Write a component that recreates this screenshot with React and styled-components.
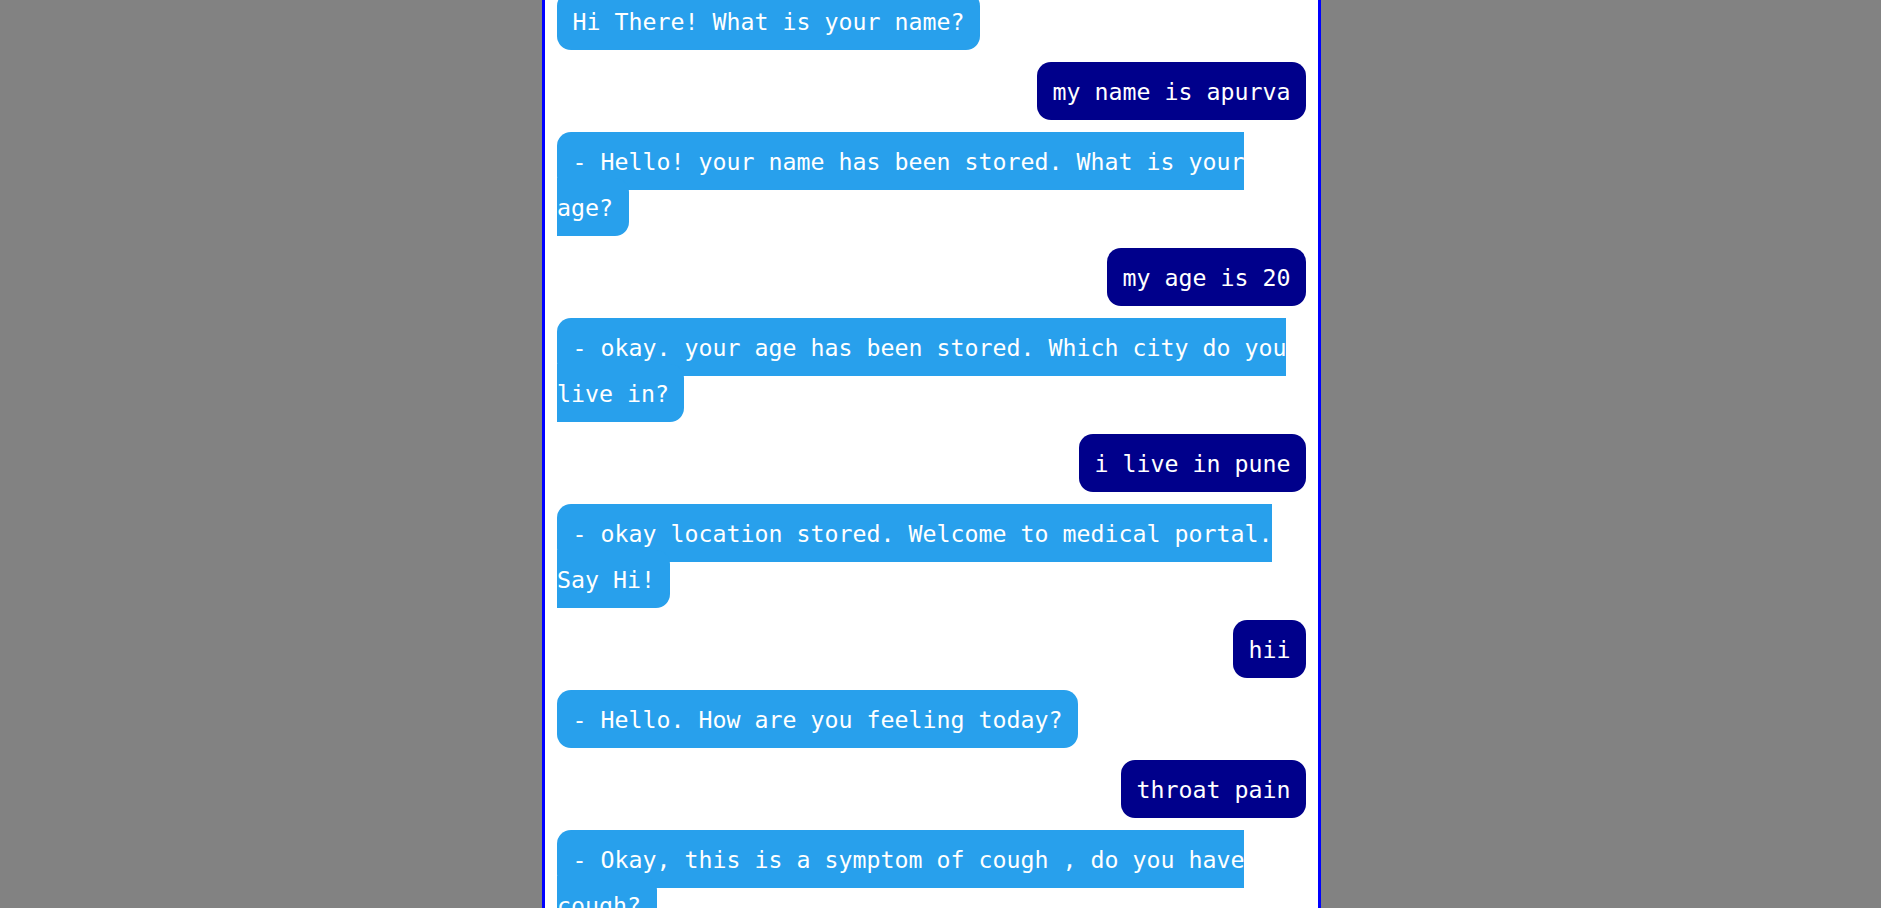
import React from "react";
import styled, { createGlobalStyle } from "styled-components";

const GlobalStyle = createGlobalStyle`
  html, body {
    margin: 0;
    padding: 0;
    height: 100%;
    overflow: hidden;
    background: #828282;
  }
  #root {
    height: 100%;
  }
`;

const Page = styled.div`
  height: 100%;
  background: #828282;
  display: flex;
  align-items: flex-start;
  justify-content: center;
  padding-right: 18px;
  box-sizing: border-box;
  overflow: hidden;
`;

const ChatBox = styled.div`
  flex: none;
  width: 749px;
  background: #ffffff;
  border: 3px solid #0000ff;
  border-top: none;
  margin-top: -1.4px;
  padding: 0 12px 120px;
  box-sizing: content-box;
  display: flex;
  flex-direction: column;
  gap: 24px;
  font-family: "DejaVu Sans Mono", "Liberation Mono", monospace;
  font-size: 23.25px;
  line-height: 46px;
`;

const Row = styled.div`
  text-align: ${(p) => (p.$user ? "right" : "left")};
`;

const Bubble = styled.span`
  display: inline;
  padding: 15.8px 15.5px;
  border-radius: 14px;
  color: #ffffff;
  background: ${(p) => (p.$user ? "#00008b" : "#28a0ec")};
  box-decoration-break: slice;
  -webkit-box-decoration-break: slice;
`;

const messages = [
  { user: false, text: "Hi There! What is your name?" },
  { user: true, text: "my name is apurva" },
  { user: false, text: "- Hello! your name has been stored. What is your age?" },
  { user: true, text: "my age is 20" },
  { user: false, text: "- okay. your age has been stored. Which city do you live in?" },
  { user: true, text: "i live in pune" },
  { user: false, text: "- okay location stored. Welcome to medical portal. Say Hi!" },
  { user: true, text: "hii" },
  { user: false, text: "- Hello. How are you feeling today?" },
  { user: true, text: "throat pain" },
  { user: false, text: "- Okay, this is a symptom of cough , do you have cough?" },
];

export default function App() {
  return (
    <>
      <GlobalStyle />
      <Page>
        <ChatBox>
          {messages.map((m, i) => (
            <Row key={i} $user={m.user}>
              <Bubble $user={m.user}>{m.text}</Bubble>
            </Row>
          ))}
        </ChatBox>
      </Page>
    </>
  );
}
